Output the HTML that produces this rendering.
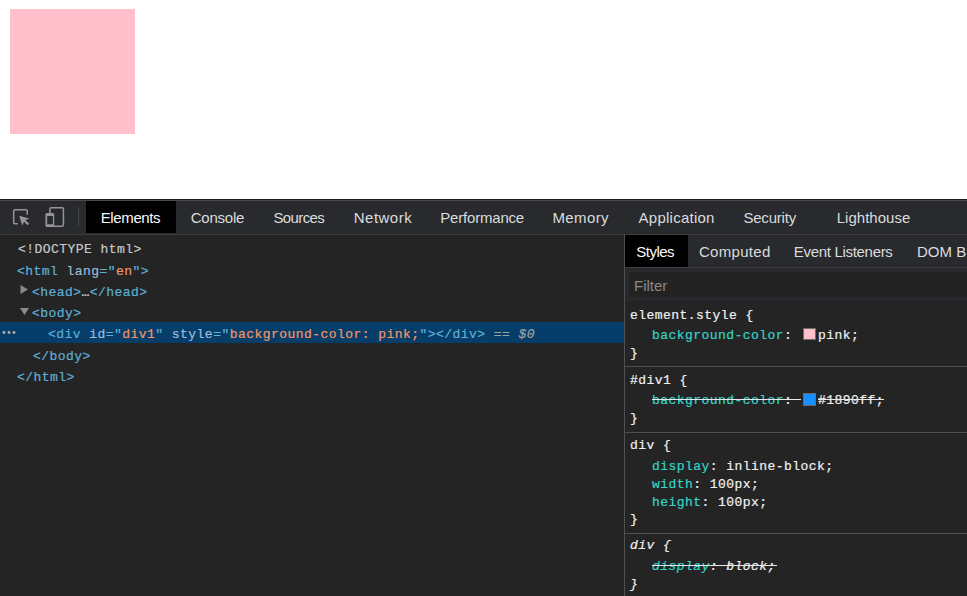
<!DOCTYPE html>
<html><head><meta charset="utf-8">
<style>
*{margin:0;padding:0;box-sizing:border-box}
html,body{width:967px;height:596px;overflow:hidden;background:#fff;position:relative}
body{font-family:"Liberation Sans",sans-serif}
.a{position:absolute}
#pink{left:10px;top:9px;width:125px;height:125px;background:#ffc0cb}
#dt{left:0;top:199px;width:967px;height:397px;background:#242424}
#l1{left:0;top:199px;width:967px;height:1px;background:#1c1c1c}
#l2{left:0;top:200px;width:967px;height:1px;background:#4a4a4a}
#tb{left:0;top:201px;width:967px;height:33px;background:#292a2d}
#tbb{left:0;top:234px;width:967px;height:1px;background:#3d3d3d}
.tab{position:absolute;top:201px;height:32px;font-size:15px;color:#dadcde;line-height:34px;white-space:nowrap}
.sel{background:#000;color:#f0f0f0}
.mono{font-family:"Liberation Mono",monospace;font-size:13px;letter-spacing:0.45px;white-space:pre;position:absolute;line-height:16px;-webkit-text-stroke:0.2px currentColor}
.tg{color:#5db0d7}.an{color:#9bbbdc}.av{color:#f29766}.dt{color:#c8c8c8}
#vdiv{left:624px;top:235px;width:1px;height:361px;background:#505050}
#sb{left:625px;top:235px;width:342px;height:361px;background:#242424}
#stb{left:625px;top:235px;width:342px;height:32px;background:#292a2d}
#stbb{left:625px;top:267px;width:342px;height:1px;background:#3d3d3d}
#fp{left:625px;top:268px;width:342px;height:33px;background:#292a2d}
#fi{left:629px;top:272px;width:338px;height:25px;background:#232323}
.sec{position:absolute;left:625px;width:342px;height:1px;background:#505050}
.pn{color:#35d4c7}.pv{color:#f0f0f0}.wt{color:#f0f0f0}
.st{text-decoration:line-through}
</style></head><body>
<div class="a" id="pink"></div>
<div class="a" id="dt"></div>
<div class="a" id="l1"></div>
<div class="a" id="l2"></div>
<div class="a" id="tb"></div>
<div class="a" id="tbb"></div>
<!-- icons -->
<svg class="a" style="left:0;top:201px" width="86" height="33" viewBox="0 0 86 33">
  <path d="M17.8 22.75 H15 Q13.65 22.75 13.65 21.4 V10.1 Q13.65 8.75 15 8.75 H25.9 Q27.25 8.75 27.25 10.1 V13.7" fill="none" stroke="#959595" stroke-width="1.5"/>
  <path d="M19.2 14.8 L29.2 17.6 L25.6 19.3 L29.1 22.8 L27.6 24.3 L24.1 20.8 L22.2 24.4 Z" fill="#959595"/>
  <rect x="49.9" y="6.75" width="13.55" height="18.4" rx="1.3" fill="none" stroke="#959595" stroke-width="1.5"/>
  <rect x="45.45" y="11.9" width="8.75" height="14" rx="1.5" fill="#959595"/>
  <rect x="47.2" y="15" width="5.7" height="8.3" fill="#292a2d"/>
  <rect x="78.1" y="6" width="1" height="19.5" fill="#44464a"/>
</svg>

<div class="a" style="left:86px;top:201px;width:90px;height:32px;background:#000"></div>
<div class="tab" id="t0" style="left:100.7px;letter-spacing:-0.37px;color:#fafafa">Elements</div>
<div class="tab" id="t1" style="left:190.7px;letter-spacing:-0.22px">Console</div>
<div class="tab" id="t2" style="left:273.4px;letter-spacing:-0.6px">Sources</div>
<div class="tab" id="t3" style="left:353.8px;letter-spacing:0.47px">Network</div>
<div class="tab" id="t4" style="left:440.3px;letter-spacing:-0.2px">Performance</div>
<div class="tab" id="t5" style="left:552.4px;letter-spacing:0.4px">Memory</div>
<div class="tab" id="t6" style="left:638.6px;letter-spacing:0.24px">Application</div>
<div class="tab" id="t7" style="left:743.4px;letter-spacing:-0.2px">Security</div>
<div class="tab" id="t8" style="left:836.7px;letter-spacing:0.02px">Lighthouse</div>

<!-- DOM tree -->
<div class="a" style="left:0;top:322px;width:624px;height:21px;background:#073d69"></div>
<div class="mono dt" style="left:18px;top:242px">&lt;!DOCTYPE html&gt;</div>
<div class="mono" style="left:17px;top:264px"><span class="tg">&lt;html</span> <span class="an">lang</span><span class="tg">="</span><span class="av">en</span><span class="tg">"&gt;</span></div>
<svg class="a" style="left:20px;top:285px" width="9" height="9"><path d="M0.5 0 L8 4.5 L0.5 9 Z" fill="#8a8a8a"/></svg>
<div class="mono" style="left:32px;top:285px"><span class="tg">&lt;head&gt;</span><span style="color:#e8e8e8">…</span><span class="tg">&lt;/head&gt;</span></div>
<svg class="a" style="left:20px;top:308px" width="10" height="8"><path d="M0 0 L9 0 L4.5 7 Z" fill="#8a8a8a"/></svg>
<div class="mono" style="left:32px;top:306px"><span class="tg">&lt;body&gt;</span></div>
<svg class="a" style="left:0;top:322px" width="20" height="21"><circle cx="4" cy="10.5" r="1.4" fill="#b8b0a8"/><circle cx="9" cy="10.5" r="1.4" fill="#b8b0a8"/><circle cx="14" cy="10.5" r="1.4" fill="#b8b0a8"/></svg>
<div class="mono" style="left:48px;top:327px"><span class="tg">&lt;div</span> <span class="an">id</span><span class="tg">="</span><span class="av">div1</span><span class="tg">"</span> <span class="an">style</span><span class="tg">="</span><span class="av">background-color: pink;</span><span class="tg">"&gt;&lt;/div&gt;</span> <span style="color:#a0a0a0">== <i>$0</i></span></div>
<div class="mono" style="left:33px;top:349px"><span class="tg">&lt;/body&gt;</span></div>
<div class="mono" style="left:17px;top:370px"><span class="tg">&lt;/html&gt;</span></div>

<!-- sidebar -->
<div class="a" id="vdiv"></div>
<div class="a" id="sb"></div>
<div class="a" id="stb"></div>
<div class="a" id="stbb"></div>
<div class="a" style="left:625px;top:235px;width:63px;height:32px;background:#000"></div>
<div class="tab" id="t9" style="left:636.3px;letter-spacing:-0.52px;top:235px;color:#fafafa">Styles</div>
<div class="tab" id="t10" style="left:699.0px;letter-spacing:0.29px;top:235px">Computed</div>
<div class="tab" id="t11" style="left:793.8px;letter-spacing:-0.31px;top:235px">Event Listeners</div>
<div class="tab" id="t12" style="left:917.0px;letter-spacing:0px;top:235px">DOM Breakpoints</div>
<div class="a" id="fp"></div>
<div class="a" id="fi"></div>
<div class="a" style="left:634px;top:277px;font-size:15px;color:#8a8a8a;line-height:18px">Filter</div>

<div class="mono wt" style="left:630px;top:308px">element.style {</div>
<div class="mono" style="left:652px;top:328px"><span class="pn">background-color</span><span class="wt">: </span></div>
<div class="a" style="left:803px;top:328px;width:13px;height:12px;background:#ffc0cb;border:1px solid #6a6a6a"></div>
<div class="mono wt" style="left:818px;top:328px">pink;</div>
<div class="mono wt" style="left:630px;top:346px">}</div>
<div class="sec" style="top:366px"></div>

<div class="mono wt" style="left:630px;top:373px">#div1 {</div>
<div class="mono" style="left:652px;top:393px"><span class="pn">background-color</span><span class="wt">: </span></div>
<div class="a" style="left:652px;top:399px;width:149px;height:1px;background:#e8e8e8"></div>
<div class="a" style="left:803px;top:393px;width:13px;height:13px;background:#1890ff;border:1px solid #6a6a6a"></div>
<div class="mono wt" style="left:818px;top:393px">#1890ff;</div>
<div class="a" style="left:818px;top:399px;width:66px;height:1px;background:#e8e8e8"></div>
<div class="mono wt" style="left:630px;top:411px">}</div>
<div class="sec" style="top:432px"></div>

<div class="mono wt" style="left:630px;top:438px">div {</div>
<div class="mono" style="left:652px;top:459px"><span class="pn">display</span><span class="wt">: inline-block;</span></div>
<div class="mono" style="left:652px;top:477px"><span class="pn">width</span><span class="wt">: 100px;</span></div>
<div class="mono" style="left:652px;top:495px"><span class="pn">height</span><span class="wt">: 100px;</span></div>
<div class="mono wt" style="left:630px;top:512px">}</div>
<div class="sec" style="top:533px"></div>

<div class="mono wt" style="left:630px;top:538px"><i>div {</i></div>
<div class="mono" style="left:652px;top:559px"><i><span class="pn">display</span><span class="wt">: block;</span></i></div>
<div class="a" style="left:652px;top:565px;width:125px;height:1px;background:#e8e8e8"></div>
<div class="mono wt" style="left:630px;top:577px"><i>}</i></div>
</body></html>
